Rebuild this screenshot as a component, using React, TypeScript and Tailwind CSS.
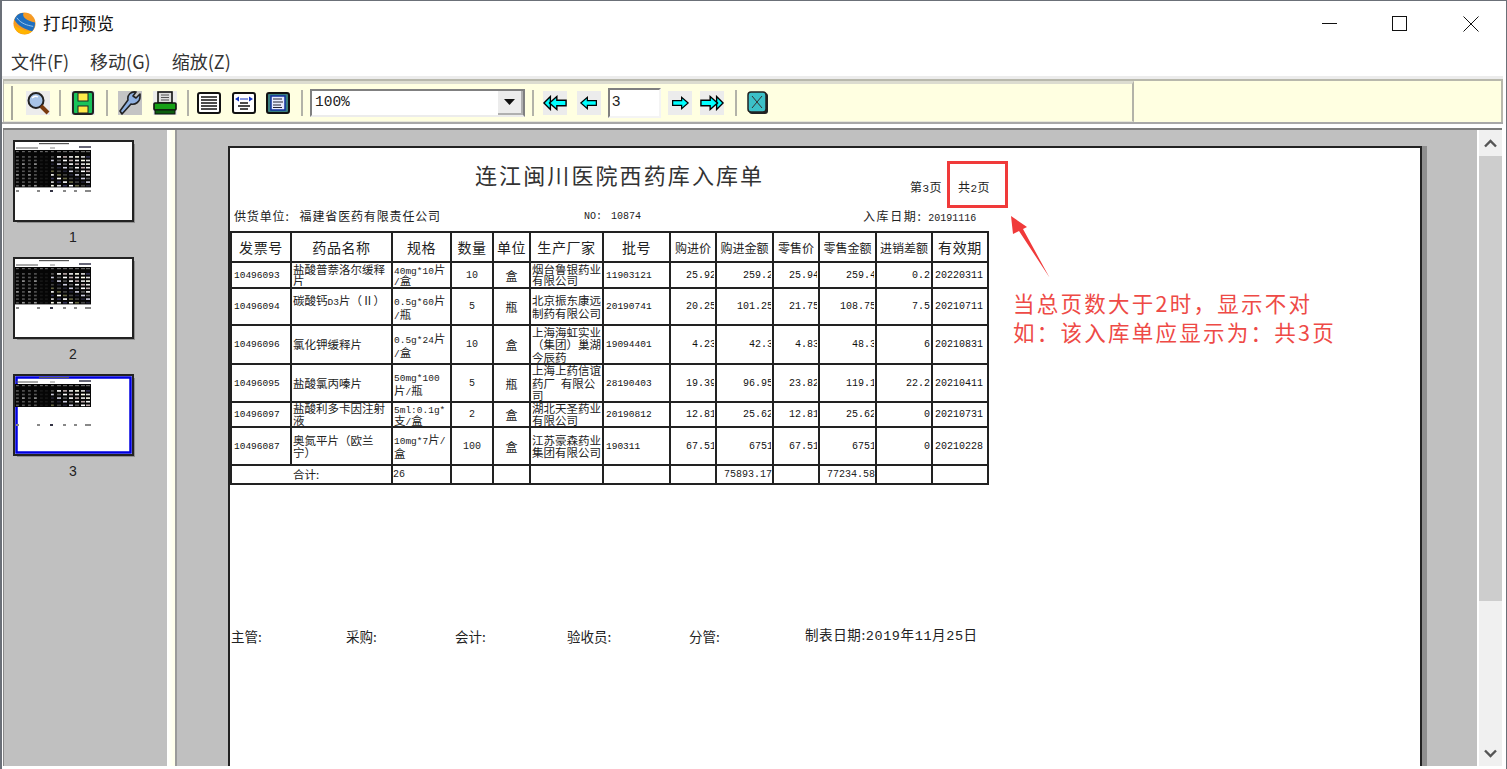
import React from "react";

const COLS = [60, 101, 59, 42, 37, 73, 67, 46, 57, 46, 57, 56, 56];
const CJK = '"Noto Sans CJK SC", sans-serif';

function Mixed({ t }: { t: string }) {
  const parts = t.match(/[\x20-\x7e]+|[^\x20-\x7e]+/g) || [];
  return (
    <>
      {parts.map((p, i) =>
        /^[\x20-\x7e]/.test(p) ? (
          <span key={i} className="font-['Liberation_Mono',monospace] text-[9.5px]">{p}</span>
        ) : (
          <span key={i}>{p}</span>
        )
      )}
    </>
  );
}

function Lines({ t, lh }: { t: string; lh: string }) {
  return (
    <div className={"pl-[1px] whitespace-pre " + lh}>
      {t.split("\n").map((l, i) => (
        <div key={i} className="h-[1lh]"><Mixed t={l} /></div>
      ))}
    </div>
  );
}

const HEAD = ["发票号", "药品名称", "规格", "数量", "单位", "生产厂家", "批号", "购进价", "购进金额", "零售价", "零售金额", "进销差额", "有效期"];
const ROWS: { h: number; c: string[] }[] = [
  { h: 26, c: ["10496093", "盐酸普萘洛尔缓释\n片", "40mg*10片\n/盒", "10", "盒", "烟台鲁银药业\n有限公司", "11903121", "25.92", "259.2", "25.94", "259.4", "0.2", "20220311"] },
  { h: 37, c: ["10496094", "碳酸钙D3片（Ⅱ）\n ", "0.5g*60片\n/瓶", "5", "瓶", "北京振东康远\n制药有限公司", "20190741", "20.25", "101.25", "21.75", "108.75", "7.5", "20210711"] },
  { h: 39, c: ["10496096", "氯化钾缓释片", "0.5g*24片\n/盒", "10", "盒", "上海海虹实业\n（集团）巢湖\n今辰药", "19094401", "4.23", "42.3", "4.83", "48.3", "6", "20210831"] },
  { h: 38, c: ["10496095", "盐酸氯丙嗪片", "50mg*100\n片/瓶", "5", "瓶", "上海上药信谊\n药厂 有限公\n司", "28190403", "19.39", "96.95", "23.82", "119.1", "22.2", "20210411"] },
  { h: 25, c: ["10496097", "盐酸利多卡因注射\n液", "5ml:0.1g*\n支/盒", "2", "盒", "湖北天圣药业\n有限公司", "20190812", "12.81", "25.62", "12.81", "25.62", "0", "20210731"] },
  { h: 38, c: ["10496087", "奥氮平片（欧兰\n宁）", "10mg*7片/\n盒", "100", "盒", "江苏豪森药业\n集团有限公司", "190311", "67.51", "6751", "67.51", "6751", "0", "20210228"] },
];

function DataTable() {
  const cell = "border-2 border-[#222] p-0 overflow-hidden";
  return (
    <table className="table-fixed border-collapse text-[#222] text-[11.5px] leading-[13px]" style={{ width: 757 }}>
      <colgroup>{COLS.map((w, i) => <col key={i} style={{ width: w }} />)}</colgroup>
      <tbody>
        <tr>
          {HEAD.map((h, i) => (
            <td key={i} className={cell}>
              <div className={"h-[28px] flex items-center justify-center whitespace-nowrap overflow-hidden " + (i >= 7 && i <= 11 ? "text-[12px]" : "text-[14px] tracking-[0.6px]")}>{h}</div>
            </td>
          ))}
        </tr>
        {ROWS.map((r, ri) => (
          <tr key={ri}>
            {r.c.map((v, i) => {
              const right = i >= 7 && i <= 11;
              const center = i === 3 || i === 4;
              const boxStyle = { height: r.h - 2 };
              const lh = r.h < 30 ? "leading-[11.5px]" : i === 2 ? "leading-[14px]" : "leading-[12.5px]";
              return (
                <td key={i} className={cell}>
                  {right ? (
                    <div className="pr-[1px]">
                      <div style={boxStyle} className="flex items-center justify-end overflow-hidden whitespace-nowrap font-['Liberation_Mono',monospace] text-[10px] text-[#111]">
                        <span className={i === 11 ? "" : "-mr-[2px]"}>{v}</span>
                      </div>
                    </div>
                  ) : i === 12 ? (
                    <div style={boxStyle} className="flex items-center pl-[2px] whitespace-nowrap overflow-hidden font-['Liberation_Mono',monospace] text-[10px] text-[#111]">{v}</div>
                  ) : i === 6 || i === 0 ? (
                    <div style={boxStyle} className="flex items-center pl-[2px] whitespace-nowrap overflow-hidden font-['Liberation_Mono',monospace] text-[9.5px] text-[#111]">{v}</div>
                  ) : center ? (
                    <div style={boxStyle} className="flex items-center justify-center overflow-hidden">
                      <span className={i === 3 ? "font-['Liberation_Mono',monospace] text-[10px]" : "text-[12px]"}>{v}</span>
                    </div>
                  ) : (
                    <div style={boxStyle} className="flex items-center overflow-hidden"><Lines t={v} lh={lh} /></div>
                  )}
                </td>
              );
            })}
          </tr>
        ))}
        <tr>
          <td colSpan={2} className={cell}><div className="h-[17px] flex items-center pl-[61px]">合计:</div></td>
          <td className={cell}><div className="h-[17px] flex items-center font-['Liberation_Mono',monospace] text-[10px]">26</div></td>
          <td className={cell} /><td className={cell} /><td className={cell} /><td className={cell} /><td className={cell} />
          <td className={cell}><div className="h-[17px] flex items-center justify-end whitespace-nowrap overflow-hidden font-['Liberation_Mono',monospace] text-[10px]"><span>75893.17</span></div></td>
          <td className={cell} />
          <td className={cell}><div className="h-[17px] flex items-center justify-end whitespace-nowrap overflow-hidden font-['Liberation_Mono',monospace] text-[10px]"><span>77234.58</span></div></td>
          <td className={cell} /><td className={cell} />
        </tr>
      </tbody>
    </table>
  );
}

function Thumb({ rows, selected }: { rows: number; selected?: boolean }) {
  const xs = [3, 9, 15, 21, 27, 32, 38, 44, 50, 56, 62, 68, 73];
  const h = rows * 3.6 + 5;
  const fills = ["#fff", "#555", "#ddd", "#223", "#eee", "#664", "#fff", "#335", "#ccd", "#ffe", "#444", "#baa"];
  return (
    <svg width="122" height="83" viewBox="0 0 122 83" className="block">
      <rect x="4" y="4" width="118" height="79" fill="#8f8f8f" />
      <rect x="1" y="1" width="119" height="80" fill="#fff" stroke="#222" strokeWidth="2" />
      {selected && <rect x="3.5" y="3.5" width="114" height="75" fill="none" stroke="#0000e0" strokeWidth="2.5" />}
      <rect x="26" y="3" width="30" height="1.2" fill="#555" />
      <rect x="3" y="7.5" width="22" height="1" fill="#555" />
      <rect x="37" y="7.5" width="5" height="1" fill="#888" />
      <rect x="66" y="6" width="12" height="2" fill="#667" />
      <rect x="2" y="10" width="76" height={h} fill="#060606" />
      {Array.from({ length: rows + 1 }).map((_, r) =>
        xs.map((x, c) => (
          <rect
            key={r + "-" + c}
            x={x}
            y={11 + r * 3.6 + (r > 0 ? 1.5 : 0)}
            width={c > 6 ? 4 : 2.8}
            height={r === 0 ? 1.2 : 1.6}
            fill={r === 0 ? "#666" : c === 5 || c === 4 ? "#181818" : c < 4 ? fills[(r * 5 + c * 3) % 12] === "#fff" ? "#999" : "#555" : fills[(r * 7 + c * 5) % 12]}
          />
        ))
      )}
      {[3, 24, 37, 50, 61, 72].map((x, i) => (
        <rect key={i} x={x} y="50" width={i === 5 ? 6 : 3} height="2" fill={i === 2 ? "#334" : "#888"} />
      ))}
    </svg>
  );
}

function Sep() {
  return <div className="w-[2px] h-[26px] bg-[#b3b3a8] shrink-0" />;
}

function Nav({ kind }: { kind: "ll" | "l" | "r" | "rr" }) {
  const left = "M1 8 L9 1 V5 H20 V11 H9 V15 Z";
  const right = "M23 8 L15 1 V5 H4 V11 H15 V15 Z";
  return (
    <div className="w-[24px] h-[24px] bg-[#ececec] flex items-center justify-center shrink-0">
      {kind === "l" && <svg width="18" height="16" viewBox="0 0 22 16"><path d={left} fill="#00ffff" stroke="#000" strokeWidth="1.5" /></svg>}
      {kind === "r" && <svg width="18" height="16" viewBox="2 0 22 16"><path d={right} fill="#00ffff" stroke="#000" strokeWidth="1.5" /></svg>}
      {kind === "ll" && (
        <svg width="24" height="16" viewBox="0 0 26 16">
          <path d="M1 8 L8 1 V15 Z" fill="#00ffff" stroke="#000" strokeWidth="1.5" />
          <path d="M7 8 L15 1 V5 H25 V11 H15 V15 Z" fill="#00ffff" stroke="#000" strokeWidth="1.5" />
        </svg>
      )}
      {kind === "rr" && (
        <svg width="24" height="16" viewBox="0 0 26 16">
          <path d="M25 8 L18 1 V15 Z" fill="#00ffff" stroke="#000" strokeWidth="1.5" />
          <path d="M19 8 L11 1 V5 H1 V11 H11 V15 Z" fill="#00ffff" stroke="#000" strokeWidth="1.5" />
        </svg>
      )}
    </div>
  );
}

function Toolbar() {
  return (
    <div className="flex items-center h-full w-[1130px] border-r-2 border-t-[3px] border-b border-r-[#b3b3a8] border-t-[#dcdcd0] border-b-[#e8e8d8] pl-[7px]">
      <div className="w-[2px] h-[34px] bg-[#a8a89c] shrink-0" />
      <div className="w-[24px] h-[24px] bg-[#ececec] ml-[13px] shrink-0 flex items-center justify-center">
        <svg width="24" height="24" viewBox="0 0 24 24">
          <circle cx="10" cy="9.5" r="7.5" fill="#a8c4e8" stroke="#222" strokeWidth="2" />
          <path d="M6 7 Q9 4 12 6" stroke="#fff" strokeWidth="1.5" fill="none" />
          <path d="M15 15 L22 22" stroke="#7a3b10" strokeWidth="4" />
        </svg>
      </div>
      <div className="ml-[9px]"><Sep /></div>
      <div className="ml-[10px] w-[24px] h-[24px] bg-[#ececec] shrink-0 flex items-center justify-center">
        <svg width="22" height="24" viewBox="0 0 22 24">
          <rect x="1" y="1" width="20" height="22" rx="2" fill="#19c35a" stroke="#222" strokeWidth="2" />
          <rect x="6" y="2" width="10" height="8" fill="#ffe94a" stroke="#222" />
          <rect x="6" y="15" width="10" height="7" fill="#ffe94a" stroke="#222" />
        </svg>
      </div>
      <div className="ml-[11px]"><Sep /></div>
      <div className="ml-[10px] w-[24px] h-[24px] bg-[#c4c4c4] shrink-0 flex items-center justify-center">
        <svg width="24" height="24" viewBox="0 0 24 24">
          <path d="M2 20 L4 23 L13 13 C17 14 22 11 22 6 L22 3 L18 7 L15 5 L18 1 C13 0 9 4 10 9 Z" fill="#8fb0e0" stroke="#222" strokeWidth="1.6" strokeLinejoin="round" />
        </svg>
      </div>
      <div className="ml-[11px] w-[24px] h-[24px] bg-[#ececec] shrink-0 flex items-center justify-center">
        <svg width="24" height="24" viewBox="0 0 24 24">
          <rect x="5" y="1" width="14" height="11" fill="#ddd" stroke="#111" strokeWidth="1.6" />
          <path d="M8 4h8M8 6.5h8M8 9h8" stroke="#555" />
          <rect x="1" y="12" width="22" height="7" rx="1" fill="#16a016" stroke="#111" strokeWidth="1.6" />
          <rect x="2" y="19" width="20" height="4" fill="#0d5e0d" stroke="#111" />
        </svg>
      </div>
      <div className="ml-[10px]"><Sep /></div>
      <div className="ml-[8px] w-[24px] h-[24px] shrink-0">
        <svg width="24" height="24" viewBox="0 0 24 24">
          <rect x="1" y="2" width="22" height="20" rx="2" fill="#fff" stroke="#111" strokeWidth="2" />
          <path d="M4 6h16M4 9h16M4 12h16M4 15h16M4 18h16" stroke="#111" strokeWidth="1.4" />
        </svg>
      </div>
      <div className="ml-[11px] w-[24px] h-[24px] shrink-0">
        <svg width="24" height="24" viewBox="0 0 24 24">
          <rect x="1" y="2" width="22" height="20" rx="2" fill="#fff" stroke="#111" strokeWidth="2" />
          <path d="M3 8 L7 5.5 V10.5 Z M21 8 L17 5.5 V10.5 Z" fill="#1030c0" />
          <path d="M8 8h8" stroke="#1030c0" />
          <path d="M8 12h8M6 15h12M8 18h8" stroke="#111" strokeWidth="1.4" />
        </svg>
      </div>
      <div className="ml-[10px] w-[24px] h-[24px] shrink-0">
        <svg width="24" height="24" viewBox="0 0 24 24">
          <rect x="1" y="2" width="22" height="20" rx="2" fill="#3a7f7f" stroke="#111" strokeWidth="2" />
          <rect x="5" y="5" width="14" height="14" fill="#e8ecff" stroke="#1030a0" strokeWidth="1.5" />
          <path d="M7 8h9M7 11h10M7 14h8M7 16.5h9" stroke="#223" />
        </svg>
      </div>
      <div className="ml-[11px]"><Sep /></div>
      <div className="ml-[7px] w-[215px] h-[28px] border-2 border-t-[#808080] border-l-[#808080] border-r-[#808080] border-b-[#ececec] bg-white flex items-center shrink-0">
        <span className="pl-[3px] flex-1 text-[14.5px] font-['Liberation_Mono',monospace] text-[#222]">100%</span>
        <div className="w-[25px] h-[24px] bg-[#ececec] border-b-2 border-r-2 border-[#b0b0b0] flex items-center justify-center">
          <svg width="11" height="6" viewBox="0 0 11 6"><path d="M0 0H11L5.5 6Z" fill="#111" /></svg>
        </div>
      </div>
      <div className="ml-[7px]"><Sep /></div>
      <div className="ml-[9px]"><Nav kind="ll" /></div>
      <div className="ml-[10px]"><Nav kind="l" /></div>
      <div className="ml-[7px] w-[53px] h-[30px] border-2 border-t-[#808080] border-l-[#808080] border-r-[#f4f4f4] border-b-[#f4f4f4] bg-white text-[15px] leading-[22px] pl-[2px] shrink-0 font-['Liberation_Sans',sans-serif] text-[#222]">3</div>
      <div className="ml-[7px]"><Nav kind="r" /></div>
      <div className="ml-[8px]"><Nav kind="rr" /></div>
      <div className="ml-[11px]"><Sep /></div>
      <div className="ml-[10px] w-[22px] h-[24px] shrink-0">
        <svg width="22" height="24" viewBox="0 0 22 24">
          <rect x="2" y="2" width="19" height="21" rx="3" fill="#222" />
          <rect x="1" y="1" width="18" height="20" rx="3" fill="#3cc0c8" stroke="#222" strokeWidth="1.5" />
          <path d="M5 5 L15 17 M15 5 L5 17" stroke="#333" />
        </svg>
      </div>
    </div>
  );
}

export default function App() {
  return (
    <div className="relative w-[1507px] h-[769px] overflow-hidden bg-white border-t border-l-2 border-r border-[#6b7078] flex flex-col" style={{ fontFamily: CJK }}>
      <div className="h-[45px] shrink-0 flex items-center pl-[11px]">
        <svg width="23" height="23" viewBox="0 0 24 24" className="shrink-0">
          <circle cx="12" cy="12" r="11.5" fill="#f59a23" />
          <path d="M1 14 A11.5 11.5 0 0 0 20 20 C13 20 6 17 1 14 Z" fill="#ffb400" />
          <path d="M1.5 8 C3 3 7 1 11 1 C9 5 14 9 23 11 C23 15 22 18 20 20 C13 18 5 15 1.5 8 Z" fill="#1f6fc0" />
          <path d="M4 6 C8 12 15 14 21 15" stroke="#9cc8ee" strokeWidth="1" fill="none" />
        </svg>
        <span className="ml-[7px] text-[17.5px] text-[#111] tracking-[0.3px]">打印预览</span>
        <div className="ml-auto flex items-center pr-[27px]">
          <div className="w-[15px] h-px bg-[#111]" />
          <div className="ml-[55px] w-[15px] h-[15px] border border-[#111]" />
          <svg className="ml-[56px]" width="16" height="16" viewBox="0 0 16 16"><path d="M0.5 0.5 L15.5 15.5 M15.5 0.5 L0.5 15.5" stroke="#111" /></svg>
        </div>
      </div>
      <div className="h-[30px] shrink-0 flex items-center pl-[9px] gap-[21px] text-[18px] text-[#333]">
        <span>文件(F)</span><span>移动(G)</span><span>缩放(Z)</span>
      </div>
      <div className="h-[3px] shrink-0 bg-[#ececec] mr-[3px]" />
      <div className="h-[43px] shrink-0 mr-[3px] ml-[1px] bg-[#ffffe1] border-t-2 border-l border-r-2 border-[#b8b8ac]">
        <Toolbar />
      </div>
      <div className="h-[2px] shrink-0 bg-[#a8a8a8] mr-[3px]" />
      <div className="h-[4px] shrink-0 bg-white" />
      <div className="flex-1 min-h-0 flex mr-[4px] ml-[1px] mb-[3px] border-t-2 border-[#7d7d7d]">
        <div className="w-[164px] bg-[#c0c0c0] shrink-0 pl-[9px] pt-[10px] flex flex-col text-[#222] border-l border-[#8a8a8a]">
          {[{ r: 9 }, { r: 9 }, { r: 5, s: true }].map((t, i) => (
            <div key={i} className="flex flex-col h-[117px] items-start">
              <Thumb rows={t.r} selected={t.s} />
              <div className="w-[120px] text-center text-[14px] font-['Liberation_Sans',sans-serif] leading-[28px]">{i + 1}</div>
            </div>
          ))}
        </div>
        <div className="w-[8px] shrink-0 bg-gradient-to-r from-white to-[#ffffe8]" />
        <div className="w-[2px] shrink-0 bg-[#9a9a9a]" />
        <div className="flex-1 min-w-0 bg-[#c0c0c0] pl-[51px] pt-[16px] overflow-hidden border-r-2 border-white">
          <div className="w-[1194px] h-[640px] bg-white border-2 border-b-0 border-[#222] shadow-[5px_0_0_#8f8f8f] text-[#222] text-[12px]">
            <div className="flex items-end h-[49px] pl-[245px]">
              <div className="text-[22px] leading-[30px] tracking-[2.1px] text-[#333] self-start mt-[11px] w-[435px] whitespace-nowrap">连江闽川医院西药库入库单</div>
              <div className="whitespace-nowrap w-[48px] tracking-[0.4px]">第<span className="font-['Liberation_Mono',monospace] text-[11px]">3</span>页</div>
              <div className="whitespace-nowrap tracking-[0.4px]">共<span className="font-['Liberation_Mono',monospace] text-[11px]">2</span>页</div>
            </div>
            <div className="flex items-center h-[16px] mt-[11px] pl-[4px] whitespace-nowrap">
              <div className="w-[350px] tracking-[0.85px]">供货单位:<span className="ml-[10px]">福建省医药有限责任公司</span></div>
              <div className="w-[27px] font-['Liberation_Mono',monospace] text-[10px]">NO:</div>
              <div className="w-[252px] font-['Liberation_Mono',monospace] text-[10px] text-[#222]">10874</div>
              <div><span className="tracking-[1.6px]">入库日期:</span><span className="ml-[6px] font-['Liberation_Mono',monospace] text-[10px] text-[#222]">20191116</span></div>
            </div>
            <div className="mt-[7px]"><DataTable /></div>
            <div className="flex items-center mt-[142px] pl-[1px] h-[18px] whitespace-nowrap text-[13.5px]">
              <div className="w-[115px]">主管:</div>
              <div className="w-[109px]">采购:</div>
              <div className="w-[112px]">会计:</div>
              <div className="w-[122px]">验收员:</div>
              <div className="w-[116px]">分管:</div>
              <div className="tracking-[0.6px]">制表日期:<span className="font-['Liberation_Mono',monospace]">2019</span>年<span className="font-['Liberation_Mono',monospace]">11</span>月<span className="font-['Liberation_Mono',monospace]">25</span>日</div>
            </div>
          </div>
        </div>
        <div className="w-[23px] shrink-0 bg-[#f0f0f0] flex flex-col">
          <div className="h-[26px] flex items-center justify-center">
            <svg width="13" height="9" viewBox="0 0 13 9"><path d="M1 7.5 L6.5 2 L12 7.5" fill="none" stroke="#555" strokeWidth="2.4" /></svg>
          </div>
          <div className="h-[445px] bg-[#cdcdcd]" />
          <div className="flex-1" />
          <div className="h-[26px] flex items-center justify-center">
            <svg width="13" height="9" viewBox="0 0 13 9"><path d="M1 1.5 L6.5 7 L12 1.5" fill="none" stroke="#555" strokeWidth="2.4" /></svg>
          </div>
        </div>
      </div>

      <div className="absolute left-[945px] top-[160px] w-[61px] h-[47px] border-[3px] border-[#f03a3a]" />
      <svg className="absolute left-[1003px] top-[209px]" width="50" height="72" viewBox="0 0 50 72">
        <path d="M6 6 L22 17 L18 19 L44.5 67.5 L14 21 L8 24 Z" fill="#f03a3a" />
      </svg>
      <div className="absolute left-[1011px] top-[287px] text-[21.5px] leading-[29px] tracking-[2.25px] text-[#ee4a46] whitespace-nowrap">
        <div>当总页数大于2时，显示不对</div>
        <div>如：该入库单应显示为：共3页</div>
      </div>
    </div>
  );
}
